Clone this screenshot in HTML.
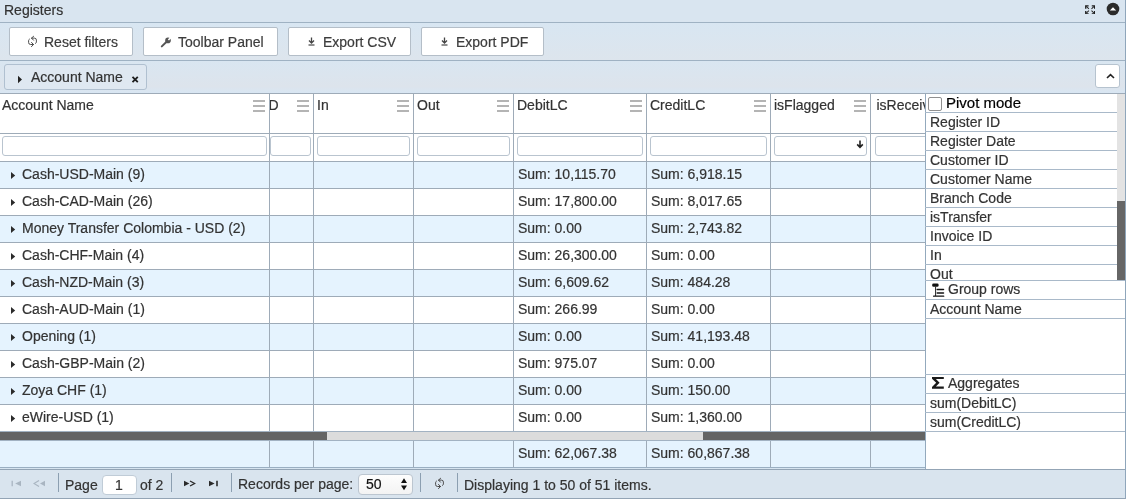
<!DOCTYPE html>
<html><head><meta charset="utf-8">
<style>
*{box-sizing:border-box;margin:0;padding:0}
html,body{width:1128px;height:502px;overflow:hidden;background:#fff;font-family:"Liberation Sans",sans-serif;font-size:14px;line-height:16px;color:#333}
div,span,svg{position:absolute}
.t,.pr span{-webkit-text-stroke-width:0.2px}
.t{white-space:nowrap}
.hl{height:1px}
.btn{top:27px;height:29px;background:#fff;border:1px solid #b4bec8;border-radius:2px;color:#3c3c3c}
.fi{top:136px;height:20px;background:#fff;border:1px solid #b9c4cf;border-radius:3px}
.mi{width:12px;height:12px;top:100px}
.mi i{position:absolute;left:0;width:12px;height:2px;background:#b4b4b4}
.pr{left:925px;width:192px;height:19px;border-top:1px solid #a9b9c9}
.pr span{left:5px;top:1px;white-space:nowrap}
</style></head><body>

<div id="root" style="left:0;top:0;width:1128px;height:502px;will-change:transform">
<div style="left:0;top:0;width:1126px;height:499px;background:#d9e5f0"></div>
<div style="left:1125px;top:0;width:1px;height:499px;background:#8fa6bb"></div>
<span class="t" style="left:4px;top:2px;color:#333">Registers</span>
<svg style="left:1084.6px;top:4.6px" width="10.4" height="9.6" viewBox="0.4 0.4 11.2 10.2">
<g fill="none" stroke="#1e1e1e" stroke-width="1.4"><path d="M1.2 4.3V1.2H4.3M7.7 1.2H10.8V4.3M1.2 6.7V9.8H4.3M7.7 9.8H10.8V6.7"/></g>
<g stroke="#2a2a2a" stroke-width="1.1"><path d="M1.8 1.8l2.8 2.8M10.2 1.8L7.4 4.6M1.8 9.2l2.8-2.8M10.2 9.2L7.4 6.4"/></g></svg>
<svg style="left:1106px;top:2px" width="14" height="14" viewBox="0 0 14 14"><circle cx="7" cy="7" r="6.3" fill="#2b2b2b"/><path d="M3.8 8.4L7 5.2l3.2 3.2z" fill="#fff"/></svg>
<div style="left:0;top:23px;width:1125px;height:37px;background:linear-gradient(#d8e6f2,#dde5ed)"></div>
<div style="left:0;top:61px;width:1125px;height:32px;background:linear-gradient(#d9e6f1,#dde4ec 80%,#d8e6f3)"></div>
<div class="hl" style="left:0;top:22px;width:1125px;background:#9fb2c3"></div>
<div class="btn" style="left:9px;width:124px"><span class="t" style="left:34px;top:6px">Reset filters</span>
<svg style="left:17px;top:7px" width="11" height="13" viewBox="0 0 11 13"><g fill="none" stroke="#4a4a4a" stroke-width="1" stroke-linecap="round"><path d="M4.5 3.1H7.3Q9.4 3.1 9.4 5.1V6.9Q9.4 7.9 8.6 8.4"/><path d="M6.6 1.3L4.5 3.1 6.5 5.2"/><path d="M6.5 9.5H3.7Q1.6 9.5 1.6 7.5V5.6Q1.6 4.6 2.4 4.1"/><path d="M4.5 7.4L6.5 9.5 4.5 11.6"/></g></svg>
</div>
<div class="btn" style="left:143px;width:135px"><span class="t" style="left:34px;top:6px">Toolbar Panel</span>
<svg style="left:16px;top:9px" width="12" height="11" viewBox="0 0 12 11"><circle cx="8" cy="3.4" r="2.8" fill="#555"/><path d="M8.4 3L11.5 -0.1" stroke="#fff" stroke-width="1.7"/><path d="M6.6 4.8L1.8 9.4" stroke="#555" stroke-width="2" stroke-linecap="round"/></svg>
</div>
<div class="btn" style="left:288px;width:123px"><span class="t" style="left:34px;top:6px">Export CSV</span>
<svg style="left:19px;top:9px" width="7" height="9" viewBox="0 0 7 9"><path d="M3.5 0.5V5.5M1 3.5L3.5 6 6 3.5" fill="none" stroke="#444" stroke-width="1.3"/><path d="M0.5 8H6.5" stroke="#444" stroke-width="1.2"/></svg>
</div>
<div class="btn" style="left:421px;width:123px"><span class="t" style="left:34px;top:6px">Export PDF</span>
<svg style="left:19px;top:9px" width="7" height="9" viewBox="0 0 7 9"><path d="M3.5 0.5V5.5M1 3.5L3.5 6 6 3.5" fill="none" stroke="#444" stroke-width="1.3"/><path d="M0.5 8H6.5" stroke="#444" stroke-width="1.2"/></svg>
</div>
<div class="hl" style="left:0;top:60px;width:1125px;background:#9fb2c3"></div>
<div style="left:4px;top:64px;width:143px;height:26px;background:#dfe8f1;border:1px solid #b0c0d0;border-radius:3px"></div>
<svg style="left:17px;top:75px" width="6" height="9" viewBox="0 0 6 9"><path d="M1 0.8L5 4.5 1 8.2z" fill="#222"/></svg>
<span class="t" style="left:31px;top:69px">Account Name</span>
<svg style="left:131px;top:76px" width="8" height="7" viewBox="0 0 8 7"><path d="M1.5 0.8L6.8 6.2M6.8 0.8L1.5 6.2" stroke="#1e1e1e" stroke-width="1.8"/></svg>
<div style="left:1095px;top:64px;width:25px;height:24px;background:#fff;border:1px solid #b6c3cf;border-radius:3px"></div>
<svg style="left:1106px;top:73px" width="9" height="6" viewBox="0 0 9 6"><path d="M1 5L4.5 1.6 8 5" fill="none" stroke="#222" stroke-width="1.6"/></svg>
<div style="left:0;top:93px;width:925px;height:374px;background:#fff"></div>
<div class="hl" style="left:0;top:93px;width:1125px;background:#9eabb8"></div>
<span class="t" style="left:2px;top:97px">Account Name</span>
<div class="mi" style="left:253px"><i style="top:0"></i><i style="top:5px"></i><i style="top:10px"></i></div>
<span class="t" style="left:268.6px;top:97px">D</span>
<div class="mi" style="left:297px"><i style="top:0"></i><i style="top:5px"></i><i style="top:10px"></i></div>
<span class="t" style="left:317px;top:97px">In</span>
<div class="mi" style="left:397px"><i style="top:0"></i><i style="top:5px"></i><i style="top:10px"></i></div>
<span class="t" style="left:417px;top:97px">Out</span>
<div class="mi" style="left:497px"><i style="top:0"></i><i style="top:5px"></i><i style="top:10px"></i></div>
<span class="t" style="left:517px;top:97px">DebitLC</span>
<div class="mi" style="left:630px"><i style="top:0"></i><i style="top:5px"></i><i style="top:10px"></i></div>
<span class="t" style="left:650px;top:97px">CreditLC</span>
<div class="mi" style="left:754px"><i style="top:0"></i><i style="top:5px"></i><i style="top:10px"></i></div>
<span class="t" style="left:774px;top:97px">isFlagged</span>
<div class="mi" style="left:854px"><i style="top:0"></i><i style="top:5px"></i><i style="top:10px"></i></div>
<span class="t" style="left:876.5px;top:97px">isReceiv</span>
<div class="hl" style="left:0;top:133px;width:925px;background:#9eabb8"></div>
<div class="fi" style="left:2px;width:265px"></div>
<div class="fi" style="left:270px;width:41px"></div>
<div class="fi" style="left:317px;width:93px"></div>
<div class="fi" style="left:417px;width:93px"></div>
<div class="fi" style="left:517px;width:126px"></div>
<div class="fi" style="left:650px;width:117px"></div>
<div class="fi" style="left:774px;width:93px"></div>
<div class="fi" style="left:875px;width:65px"></div>
<svg style="left:856px;top:140px" width="8" height="9" viewBox="0 0 8 9"><path d="M4 0.5V7M1.2 4.4L4 7.4 6.8 4.4" fill="none" stroke="#222" stroke-width="1.6"/></svg>
<div style="left:0;top:161px;width:925px;height:27px;background:#e5f3fe"></div>
<div class="hl" style="left:0;top:161px;width:925px;background:#9eabb8"></div>
<svg style="left:10px;top:172px" width="6" height="8" viewBox="0 0 6 8"><path d="M1 0L5.2 3.5 1 7z" fill="#2b2b2b"/></svg>
<span class="t" style="left:22px;top:166px">Cash-USD-Main (9)</span>
<span class="t" style="left:518px;top:166px">Sum: 10,115.70</span>
<span class="t" style="left:651px;top:166px">Sum: 6,918.15</span>
<div style="left:0;top:188px;width:925px;height:27px;background:#fff"></div>
<div class="hl" style="left:0;top:188px;width:925px;background:#9eabb8"></div>
<svg style="left:10px;top:199px" width="6" height="8" viewBox="0 0 6 8"><path d="M1 0L5.2 3.5 1 7z" fill="#2b2b2b"/></svg>
<span class="t" style="left:22px;top:193px">Cash-CAD-Main (26)</span>
<span class="t" style="left:518px;top:193px">Sum: 17,800.00</span>
<span class="t" style="left:651px;top:193px">Sum: 8,017.65</span>
<div style="left:0;top:215px;width:925px;height:27px;background:#e5f3fe"></div>
<div class="hl" style="left:0;top:215px;width:925px;background:#9eabb8"></div>
<svg style="left:10px;top:226px" width="6" height="8" viewBox="0 0 6 8"><path d="M1 0L5.2 3.5 1 7z" fill="#2b2b2b"/></svg>
<span class="t" style="left:22px;top:220px">Money Transfer Colombia - USD (2)</span>
<span class="t" style="left:518px;top:220px">Sum: 0.00</span>
<span class="t" style="left:651px;top:220px">Sum: 2,743.82</span>
<div style="left:0;top:242px;width:925px;height:27px;background:#fff"></div>
<div class="hl" style="left:0;top:242px;width:925px;background:#9eabb8"></div>
<svg style="left:10px;top:253px" width="6" height="8" viewBox="0 0 6 8"><path d="M1 0L5.2 3.5 1 7z" fill="#2b2b2b"/></svg>
<span class="t" style="left:22px;top:247px">Cash-CHF-Main (4)</span>
<span class="t" style="left:518px;top:247px">Sum: 26,300.00</span>
<span class="t" style="left:651px;top:247px">Sum: 0.00</span>
<div style="left:0;top:269px;width:925px;height:27px;background:#e5f3fe"></div>
<div class="hl" style="left:0;top:269px;width:925px;background:#9eabb8"></div>
<svg style="left:10px;top:280px" width="6" height="8" viewBox="0 0 6 8"><path d="M1 0L5.2 3.5 1 7z" fill="#2b2b2b"/></svg>
<span class="t" style="left:22px;top:274px">Cash-NZD-Main (3)</span>
<span class="t" style="left:518px;top:274px">Sum: 6,609.62</span>
<span class="t" style="left:651px;top:274px">Sum: 484.28</span>
<div style="left:0;top:296px;width:925px;height:27px;background:#fff"></div>
<div class="hl" style="left:0;top:296px;width:925px;background:#9eabb8"></div>
<svg style="left:10px;top:307px" width="6" height="8" viewBox="0 0 6 8"><path d="M1 0L5.2 3.5 1 7z" fill="#2b2b2b"/></svg>
<span class="t" style="left:22px;top:301px">Cash-AUD-Main (1)</span>
<span class="t" style="left:518px;top:301px">Sum: 266.99</span>
<span class="t" style="left:651px;top:301px">Sum: 0.00</span>
<div style="left:0;top:323px;width:925px;height:27px;background:#e5f3fe"></div>
<div class="hl" style="left:0;top:323px;width:925px;background:#9eabb8"></div>
<svg style="left:10px;top:334px" width="6" height="8" viewBox="0 0 6 8"><path d="M1 0L5.2 3.5 1 7z" fill="#2b2b2b"/></svg>
<span class="t" style="left:22px;top:328px">Opening (1)</span>
<span class="t" style="left:518px;top:328px">Sum: 0.00</span>
<span class="t" style="left:651px;top:328px">Sum: 41,193.48</span>
<div style="left:0;top:350px;width:925px;height:27px;background:#fff"></div>
<div class="hl" style="left:0;top:350px;width:925px;background:#9eabb8"></div>
<svg style="left:10px;top:361px" width="6" height="8" viewBox="0 0 6 8"><path d="M1 0L5.2 3.5 1 7z" fill="#2b2b2b"/></svg>
<span class="t" style="left:22px;top:355px">Cash-GBP-Main (2)</span>
<span class="t" style="left:518px;top:355px">Sum: 975.07</span>
<span class="t" style="left:651px;top:355px">Sum: 0.00</span>
<div style="left:0;top:377px;width:925px;height:27px;background:#e5f3fe"></div>
<div class="hl" style="left:0;top:377px;width:925px;background:#9eabb8"></div>
<svg style="left:10px;top:388px" width="6" height="8" viewBox="0 0 6 8"><path d="M1 0L5.2 3.5 1 7z" fill="#2b2b2b"/></svg>
<span class="t" style="left:22px;top:382px">Zoya CHF (1)</span>
<span class="t" style="left:518px;top:382px">Sum: 0.00</span>
<span class="t" style="left:651px;top:382px">Sum: 150.00</span>
<div style="left:0;top:404px;width:925px;height:27px;background:#fff"></div>
<div class="hl" style="left:0;top:404px;width:925px;background:#9eabb8"></div>
<svg style="left:10px;top:415px" width="6" height="8" viewBox="0 0 6 8"><path d="M1 0L5.2 3.5 1 7z" fill="#2b2b2b"/></svg>
<span class="t" style="left:22px;top:409px">eWire-USD (1)</span>
<span class="t" style="left:518px;top:409px">Sum: 0.00</span>
<span class="t" style="left:651px;top:409px">Sum: 1,360.00</span>
<div style="left:0;top:440px;width:925px;height:27px;background:#e5f3fe"></div>
<span class="t" style="left:518px;top:445px">Sum: 62,067.38</span>
<span class="t" style="left:651px;top:445px">Sum: 60,867.38</span>
<div style="left:269px;top:93px;width:1px;height:374px;background:#9eabb8"></div>
<div style="left:313px;top:93px;width:1px;height:374px;background:#9eabb8"></div>
<div style="left:413px;top:93px;width:1px;height:374px;background:#9eabb8"></div>
<div style="left:513px;top:93px;width:1px;height:374px;background:#9eabb8"></div>
<div style="left:646px;top:93px;width:1px;height:374px;background:#9eabb8"></div>
<div style="left:770px;top:93px;width:1px;height:374px;background:#9eabb8"></div>
<div style="left:870px;top:93px;width:1px;height:374px;background:#9eabb8"></div>
<div style="left:0;top:431px;width:925px;height:10px;background:#a2b2c2"></div>
<div style="left:0;top:432px;width:925px;height:8px;background:#dcdcdc"></div>
<div style="left:0;top:432px;width:327px;height:8px;background:#646464"></div>
<div style="left:703px;top:432px;width:222px;height:8px;background:#646464"></div>
<div style="left:925px;top:93px;width:200px;height:376px;background:#fff;border-left:1px solid #93a9bd"></div>
<div style="left:1117px;top:94px;width:8px;height:186px;background:#e3e3e3"></div>
<div style="left:1117px;top:201px;width:8px;height:79px;background:#666"></div>
<div class="hl" style="left:925px;top:93px;width:200px;background:#9eabb8"></div>
<div style="left:928px;top:97px;width:14px;height:14px;border:1px solid #909090;border-radius:2px;background:#fff"></div>
<span class="t" style="left:946px;top:95px;font-size:15px;color:#000">Pivot mode</span>
<div class="pr" style="top:112px;"><span>Register ID</span></div>
<div class="pr" style="top:131px;"><span>Register Date</span></div>
<div class="pr" style="top:150px;"><span>Customer ID</span></div>
<div class="pr" style="top:169px;"><span>Customer Name</span></div>
<div class="pr" style="top:188px;"><span>Branch Code</span></div>
<div class="pr" style="top:207px;"><span>isTransfer</span></div>
<div class="pr" style="top:226px;"><span>Invoice ID</span></div>
<div class="pr" style="top:245px;"><span>In</span></div>
<div class="pr" style="top:264px;height:16px;overflow:hidden"><span>Out</span></div>
<div style="left:925px;top:280px;width:200px;height:19px;border-top:1px solid #a9b9c9"><span class="t" style="left:23px;top:0px">Group rows</span></div>
<svg style="left:931px;top:283px" width="14" height="15" viewBox="0 0 14 15"><rect x="1.2" y="0.4" width="6.4" height="3.4" rx="1.3" fill="#111"/><path d="M4.6 3.5V13" stroke="#222" stroke-width="1"/><path d="M2.6 13.2H12.7" stroke="#111" stroke-width="1.3" stroke-linecap="round"/><path d="M6.2 6.6H12.5M6.2 9.9H12.5" stroke="#111" stroke-width="1.5" stroke-linecap="round"/></svg>
<div style="left:925px;top:299px;width:200px;height:19px;border-top:1px solid #a9b9c9"><span class="t" style="left:5px;top:1px">Account Name</span></div>
<div style="left:925px;top:374px;width:200px;height:19px;border-top:1px solid #a9b9c9"><span class="t" style="left:23px;top:0px">Aggregates</span></div>
<svg style="left:931px;top:376px" width="13" height="13" viewBox="0 0 13 13"><path d="M1 0.9H12.8V3H4.9L8.6 6.8 4.9 10.6H12.8V12.7H1V10.9L5.2 6.8 1 2.7z" fill="#1a1a1a"/></svg>
<div style="left:925px;top:393px;width:200px;height:19px;border-top:1px solid #a9b9c9"><span class="t" style="left:5px;top:1px">sum(DebitLC)</span></div>
<div style="left:925px;top:412px;width:200px;height:19px;border-top:1px solid #a9b9c9"><span class="t" style="left:5px;top:1px">sum(CreditLC)</span></div>
<div class="hl" style="left:925px;top:431px;width:200px;background:#a9b9c9"></div>
<div class="hl" style="left:925px;top:318px;width:200px;background:#a9b9c9"></div>
<div style="left:0;top:467px;width:925px;height:1px;background:#9aafc2"></div>
<div style="left:0;top:468px;width:925px;height:1px;background:#d6e4f0"></div>
<div style="left:0;top:469px;width:1125px;height:1px;background:#93a4b5"></div>
<div style="left:0;top:470px;width:1125px;height:28px;background:#d9e4ee"></div>
<div style="left:0;top:498px;width:1126px;height:1px;background:#93a4b5"></div>
<div style="left:0;top:499px;width:1128px;height:3px;background:#fff"></div>
<svg style="left:11px;top:480px" width="11" height="7" viewBox="0 0 11 7"><path d="M1.2 0.7V6.3" stroke="#a9b5c1" stroke-width="1.3"/><path d="M10 0.7L4.2 3.5 10 6.3z" fill="#a9b5c1"/></svg>
<svg style="left:33px;top:480px" width="13" height="7" viewBox="0 0 13 7"><path d="M6 0.6L1 3.5 6 6.4" fill="none" stroke="#a9b5c1" stroke-width="1.2"/><path d="M12 0.7L7 3.5 12 6.3z" fill="#a9b5c1"/></svg>
<div style="left:58px;top:473px;width:1px;height:19px;background:#8c9fb1"></div>
<span class="t" style="left:65px;top:477px">Page</span>
<div style="left:102px;top:475px;width:35px;height:20px;background:#fff;border:1px solid #c0ccd7;border-radius:4px"></div>
<span class="t" style="left:115px;top:477px">1</span>
<span class="t" style="left:140px;top:477px">of 2</span>
<div style="left:171px;top:473px;width:1px;height:19px;background:#8c9fb1"></div>
<svg style="left:183px;top:480px" width="13" height="7" viewBox="0 0 13 7"><path d="M1 0.8L6.4 3.5 1 6.2z" fill="#2a2a2a"/><path d="M7 1L11.6 3.5 7 6" fill="none" stroke="#2a2a2a" stroke-width="1.3"/></svg>
<svg style="left:208px;top:480px" width="11" height="7" viewBox="0 0 11 7"><path d="M1 0.8L6.6 3.5 1 6.2z" fill="#2a2a2a"/><path d="M9 0.8V6.2" stroke="#2a2a2a" stroke-width="1.6"/></svg>
<div style="left:231px;top:473px;width:1px;height:19px;background:#8c9fb1"></div>
<span class="t" style="left:238px;top:476px">Records per page:</span>
<div style="left:358px;top:474px;width:55px;height:21px;background:linear-gradient(#fdfdfd,#f3f3f3);border:1px solid #bcc6d0;border-radius:4px"></div>
<span class="t" style="left:366px;top:476px;color:#111">50</span>
<svg style="left:400px;top:477px" width="8" height="14" viewBox="0 0 8 14"><path d="M1 6L4 1.3 7 6z M1 8.6L4 13.3 7 8.6z" fill="#111"/></svg>
<div style="left:420px;top:473px;width:1px;height:19px;background:#8c9fb1"></div>
<svg style="left:434px;top:477px" width="11" height="13" viewBox="0 0 11 13"><g fill="none" stroke="#4a4a4a" stroke-width="1" stroke-linecap="round"><path d="M4.5 3.1H7.3Q9.4 3.1 9.4 5.1V6.9Q9.4 7.9 8.6 8.4"/><path d="M6.6 1.3L4.5 3.1 6.5 5.2"/><path d="M6.5 9.5H3.7Q1.6 9.5 1.6 7.5V5.6Q1.6 4.6 2.4 4.1"/><path d="M4.5 7.4L6.5 9.5 4.5 11.6"/></g></svg>
<div style="left:457px;top:473px;width:1px;height:19px;background:#8c9fb1"></div>
<span class="t" style="left:464px;top:477px">Displaying 1 to 50 of 51 items.</span>
</div></body></html>
